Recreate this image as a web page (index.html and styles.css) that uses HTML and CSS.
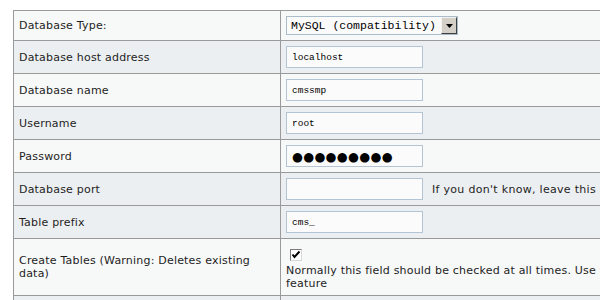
FILE: index.html
```html
<!DOCTYPE html>
<html>
<head>
<meta charset="utf-8">
<link rel="stylesheet" href="styles.css">
</head>
<body>
<div class="page">
  <table class="form">
    <tr class="r1">
      <td class="label">Database Type:</td>
      <td class="field">
        <span class="select">
          <span class="select-text">MySQL (compatibility)</span>
          <span class="select-btn"><svg width="7" height="4" viewBox="0 0 7 4"><path d="M0 0h7L3.5 4z" fill="#000"/></svg></span>
        </span>
      </td>
    </tr>
    <tr class="r2">
      <td class="label">Database host address</td>
      <td class="field"><input class="text" type="text" value="localhost"></td>
    </tr>
    <tr class="r1">
      <td class="label">Database name</td>
      <td class="field"><input class="text" type="text" value="cmssmp"></td>
    </tr>
    <tr class="r2">
      <td class="label">Username</td>
      <td class="field"><input class="text" type="text" value="root"></td>
    </tr>
    <tr class="r1">
      <td class="label">Password</td>
      <td class="field"><input class="text pw" type="text" value="●●●●●●●●●"></td>
    </tr>
    <tr class="r2">
      <td class="label">Database port</td>
      <td class="field"><input class="text" type="text" value=""><span class="hint">If you don't know, leave this blank</span></td>
    </tr>
    <tr class="r2">
      <td class="label">Table prefix</td>
      <td class="field"><input class="text" type="text" value="cms_"></td>
    </tr>
    <tr class="r1">
      <td class="label">Create Tables (Warning: Deletes existing data)</td>
      <td class="field">
        <span class="check"><svg width="10" height="10" viewBox="0 0 10 10"><path d="M1.5 4.5l2 2.5 5-5.5" fill="none" stroke="#000" stroke-width="2"/></svg></span>
        <div class="note">Normally this field should be checked at all times. Use this only to skip the table creation<br>feature</div>
      </td>
    </tr>
    <tr class="r2">
      <td class="label">&nbsp;</td>
      <td class="field">&nbsp;</td>
    </tr>
  </table>
</div>
</body>
</html>
```

FILE: styles.css
```css
html, body {
  margin: 0;
  padding: 0;
  overflow: hidden;
  background: #ffffff;
}
.page {
  padding: 10px 0 0 13px;
  width: 1100px;
}
.form {
  border-collapse: collapse;
  width: 1000px;
  font-family: "DejaVu Sans", Verdana, sans-serif;
  font-size: 11px;
  letter-spacing: 0.2px;
  color: #1e1e1e;
}
.form td {
  border: 1px solid #9a9a9a;
  padding: 5px;
  vertical-align: middle;
}
.r1 td { background: #f7f8f8; }
.r2 td { background: #eceff1; }
.form td.label {
  width: 256px;
  line-height: 13px;
}
.form td.field {
  white-space: nowrap;
  line-height: 13px;
}
.text {
  box-sizing: border-box;
  width: 137px;
  height: 22px;
  border: 1px solid #b3c5d4;
  background: #fbfbfb;
  padding: 0 0 0 5px;
  margin: 0;
  font-family: "Liberation Mono", "DejaVu Sans Mono", monospace;
  font-size: 9.5px;
  color: #000;
  vertical-align: middle;
  outline: none;
}
.pw {
  font-family: "DejaVu Sans", sans-serif;
  font-size: 12.5px;
  letter-spacing: 0.3px;
  padding-left: 5px;
}
.hint {
  margin-left: 9px;
  letter-spacing: 0.3px;
  vertical-align: middle;
}
.select {
  display: inline-flex;
  align-items: center;
  box-sizing: border-box;
  width: 172px;
  height: 19px;
  border: 1px solid #a9bccb;
  background: #fbfbfb;
  vertical-align: middle;
}
.select-text {
  flex: 1;
  padding-left: 4px;
  font-family: "Liberation Mono", "DejaVu Sans Mono", monospace;
  font-size: 11.5px;
  letter-spacing: 0;
  color: #000;
}
.select-btn {
  box-sizing: border-box;
  width: 16px;
  height: 17px;
  display: flex;
  align-items: center;
  justify-content: center;
  background: #d4d0c8;
  border-top: 1px solid #f4f2ee;
  border-left: 1px solid #f4f2ee;
  border-right: 1px solid #404040;
  border-bottom: 1px solid #404040;
}
.check {
  display: flex;
  align-items: center;
  justify-content: center;
  box-sizing: border-box;
  width: 12px;
  height: 12px;
  margin: 5px 0 3px 4px;
  background: #fff;
  border-top: 1px solid #7a7a7a;
  border-left: 1px solid #7a7a7a;
  border-right: 1px solid #d8d8d8;
  border-bottom: 1px solid #d8d8d8;
}
.note {
  line-height: 13px;
}
```
